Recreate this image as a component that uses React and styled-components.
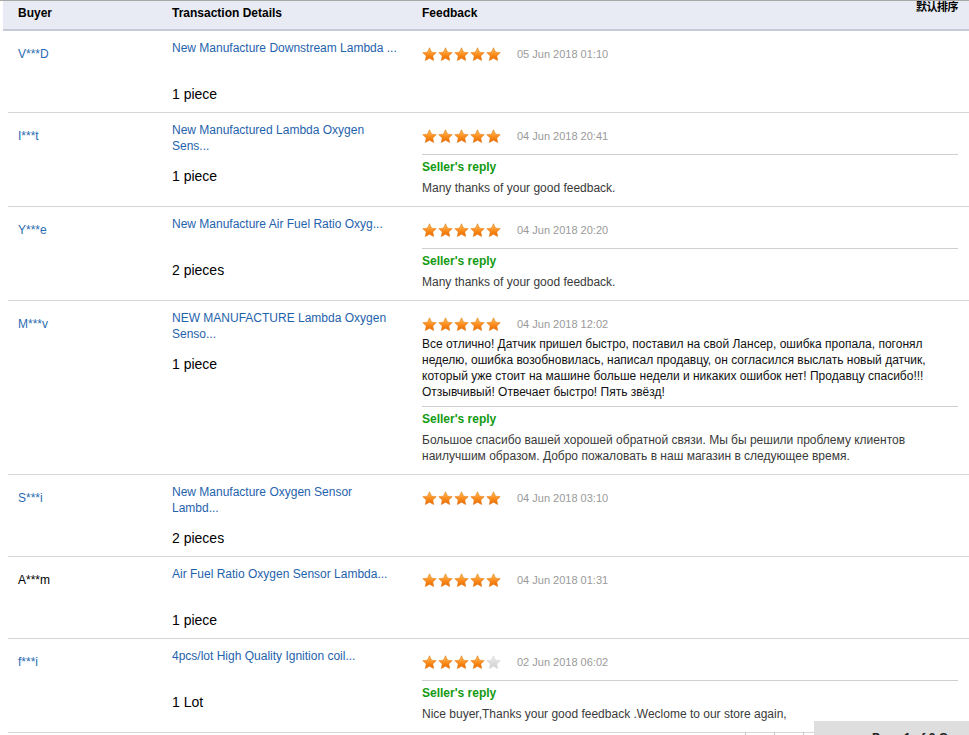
import styled, { createGlobalStyle } from "styled-components";

const GlobalStyle = createGlobalStyle`
  html, body {
    margin: 0;
    padding: 0;
    background: #fff;
    overflow: hidden;
  }
  body {
    font-family: "Liberation Sans", Arial, sans-serif;
    font-size: 12px;
    color: #000;
  }
`;

const Page = styled.div`
  position: relative;
  width: 969px;
  height: 735px;
  overflow: hidden;
  border-top: 1px solid #a8a8a8;
  box-sizing: border-box;
`;

const Header = styled.div`
  position: relative;
  display: grid;
  grid-template-columns: 154px 250px 1fr;
  margin-left: 3px;
  padding-left: 15px;
  height: 28px;
  background: #e8ebf3;
  border-bottom: 2px solid #c6cad6;
`;

const HeadCell = styled.div`
  font-weight: bold;
  font-size: 12px;
  line-height: 24px;
  color: #000;
`;

const Sort = styled.div`
  position: absolute;
  top: -2px;
  right: 11px;
  font-weight: bold;
  font-size: 11px;
  line-height: 14px;
  font-family: "Noto Sans CJK SC", "Liberation Sans", sans-serif;
  letter-spacing: -0.5px;
`;

const Row = styled.div`
  display: grid;
  grid-template-columns: 154px 250px 536px;
  margin-left: 8px;
  padding-left: 10px;
  border-bottom: 1px solid #d6d6d6;
`;

const BuyerCell = styled.div`
  padding-top: 15px;
  line-height: 16px;
  font-size: 12px;
  color: ${(p) => (p.$plain ? "#000" : "#2a6bb3")};
`;

const DetailCell = styled.div`
  padding: 9px 0;
`;

const ItemLink = styled.a`
  display: block;
  min-height: 32px;
  line-height: 16px;
  font-size: 12px;
  color: #1f63ad;
  text-decoration: none;
  white-space: pre-line;
`;

const Qty = styled.div`
  margin-top: 13px;
  font-size: 14px;
  line-height: 18px;
`;

const FeedbackCell = styled.div`
  padding: 9px 0 10px;
`;

const StarLine = styled.div`
  display: flex;
  align-items: center;
  height: 20px;
  margin-top: 4px;
`;

const Stars = styled.div`
  display: flex;
  gap: 1px;
  margin-right: 16px;
`;

const DateText = styled.span`
  font-size: 11px;
  color: #9a9a9a;
`;

const Review = styled.div`
  margin-top: 2px;
  margin-right: 8px;
  line-height: 16px;
  font-size: 12px;
  color: #111;
`;

const Reply = styled.div`
  margin-top: ${(p) => (p.$afterReview ? "6px" : "8px")};
  border-top: 1px solid #cfcfcf;
  padding-top: 4px;
`;

const ReplyTitle = styled.div`
  color: #129a12;
  font-weight: bold;
  font-size: 12px;
  line-height: 16px;
`;

const ReplyText = styled.div`
  margin-top: 5px;
  margin-right: 8px;
  color: #3a3a3a;
  font-size: 12px;
  line-height: 16px;
`;

const Pager = styled.div`
  position: absolute;
  right: 0;
  top: 720px;
  width: 155px;
  height: 30px;
  background: #dedede;
  font-size: 12px;
  line-height: 14px;
  padding: 10px 0 0 58px;
  box-sizing: border-box;
  color: #222;
  font-weight: bold;
`;

const PagerTicks = styled.div`
  position: absolute;
  left: 745px;
  top: 731px;
  display: flex;
`;

const Tick = styled.span`
  width: 28px;
  height: 10px;
  border-left: 1px solid #c8c8c8;
`;

const Star = ({ on, id }) => (
  <svg width="15" height="15" viewBox="0 0 24 24">
    <defs>
      <linearGradient id={id} x1="0" y1="0" x2="0" y2="1">
        <stop offset="0" stopColor={on ? "#ffc15a" : "#eeeeee"} />
        <stop offset="0.55" stopColor={on ? "#fb8a1c" : "#dddddd"} />
        <stop offset="1" stopColor={on ? "#e96a00" : "#d2d2d2"} />
      </linearGradient>
    </defs>
    <path
      d="M12 1.2l3.3 7 7.5.9-5.6 5.1 1.5 7.5L12 17.9l-6.7 3.8 1.5-7.5L1.2 9.1l7.5-.9z"
      fill={`url(#${id})`}
      stroke={on ? "#e07000" : "#d0d0d0"}
      strokeWidth="0.8"
      strokeLinejoin="round"
    />
  </svg>
);

const rows = [
  {
    buyer: "V***D",
    item: "New Manufacture Downstream Lambda ...",
    qty: "1 piece",
    stars: 5,
    date: "05 Jun 2018 01:10",
  },
  {
    buyer: "I***t",
    item: "New Manufactured Lambda Oxygen\nSens...",
    qty: "1 piece",
    stars: 5,
    date: "04 Jun 2018 20:41",
    reply: "Many thanks of your good feedback.",
  },
  {
    buyer: "Y***e",
    item: "New Manufacture Air Fuel Ratio Oxyg...",
    qty: "2 pieces",
    stars: 5,
    date: "04 Jun 2018 20:20",
    reply: "Many thanks of your good feedback.",
  },
  {
    buyer: "M***v",
    item: "NEW MANUFACTURE Lambda Oxygen\nSenso...",
    qty: "1 piece",
    stars: 5,
    date: "04 Jun 2018 12:02",
    review:
      "Все отлично! Датчик пришел быстро, поставил на свой Лансер, ошибка пропала, погонял неделю, ошибка возобновилась, написал продавцу, он согласился выслать новый датчик, который уже стоит на машине больше недели и никаких ошибок нет! Продавцу спасибо!!! Отзывчивый! Отвечает быстро! Пять звёзд!",
    reply:
      "Большое спасибо вашей хорошей обратной связи. Мы бы решили проблему клиентов наилучшим образом. Добро пожаловать в наш магазин в следующее время.",
  },
  {
    buyer: "S***i",
    item: "New Manufacture Oxygen Sensor\nLambd...",
    qty: "2 pieces",
    stars: 5,
    date: "04 Jun 2018 03:10",
  },
  {
    buyer: "A***m",
    plain: true,
    item: "Air Fuel Ratio Oxygen Sensor Lambda...",
    qty: "1 piece",
    stars: 5,
    date: "04 Jun 2018 01:31",
  },
  {
    buyer: "f***i",
    item: "4pcs/lot High Quality Ignition coil...",
    qty: "1 Lot",
    stars: 4,
    date: "02 Jun 2018 06:02",
    reply: "Nice buyer,Thanks your good feedback .Weclome to our store again,",
  },
];

const App = () => {
  return (
    <Page>
      <GlobalStyle />
      <Header>
        <HeadCell>Buyer</HeadCell>
        <HeadCell>Transaction Details</HeadCell>
        <HeadCell>Feedback</HeadCell>
        <Sort>默认排序</Sort>
      </Header>
      {rows.map((r, i) => (
        <Row key={i}>
          <BuyerCell $plain={r.plain}>{r.buyer}</BuyerCell>
          <DetailCell>
            <ItemLink href="#">{r.item}</ItemLink>
            <Qty>{r.qty}</Qty>
          </DetailCell>
          <FeedbackCell>
            <StarLine>
              <Stars>
                {[0, 1, 2, 3, 4].map((s) => (
                  <Star key={s} on={s < r.stars} id={`g${i}-${s}`} />
                ))}
              </Stars>
              <DateText>{r.date}</DateText>
            </StarLine>
            {r.review && <Review>{r.review}</Review>}
            {r.reply && (
              <Reply $afterReview={!!r.review}>
                <ReplyTitle>Seller's reply</ReplyTitle>
                <ReplyText>{r.reply}</ReplyText>
              </Reply>
            )}
          </FeedbackCell>
        </Row>
      ))}
      <PagerTicks>
        <Tick />
        <Tick />
        <Tick />
      </PagerTicks>
      <Pager>Page 1 of 3 Go</Pager>
    </Page>
  );
};

export default App;
